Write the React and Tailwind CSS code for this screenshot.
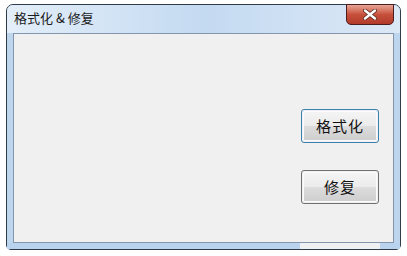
import React from "react";

const font = { fontFamily: '"Noto Sans CJK SC", "Liberation Sans", sans-serif' };

const AeroButton = ({ label, focused }) => (
  <button
    type="button"
    className={`w-[78px] h-[34px] rounded-[3px] border ${
      focused ? "border-[#3c7fb1]" : "border-[#707070]"
    } p-px`}
  >
    <span className="flex h-full w-full flex-col rounded-[2px] border border-[#fbfbfb] overflow-hidden relative">
      <span className="h-1/2 bg-gradient-to-b from-[#f4f4f4] to-[#ebebeb]" />
      <span className="h-1/2 bg-gradient-to-b from-[#dddddd] to-[#cfcfcf]" />
      <span className="absolute inset-0 flex items-center justify-center text-[15px] text-[#111] tracking-[1px]">
        {label}
      </span>
    </span>
  </button>
);

export default function App() {
  return (
    <div className="w-[407px] h-[256px] bg-white overflow-hidden pt-[4px]" style={font}>
      <div className="ml-[6px] w-[395px] h-[246px] rounded-t-[7px] rounded-b-[5px] border border-[#2f3b48] bg-[#bed5ee] flex flex-col">
        {/* title bar */}
        <div className="h-[28px] flex items-start justify-between rounded-t-[6px] bg-gradient-to-r from-[#e3eef9] via-[#c4daf1] to-[#dbe8f6] pl-[7px] pr-[6px]">
          <span className="pt-[5px] text-[13px] leading-[16px] text-[#1b1b1b]">格式化 &amp; 修复</span>
          <div className="-mt-px w-[48px] h-[21px] rounded-b-[5px] border border-[#4b1d1d] bg-gradient-to-b from-[#e8a596] via-[#c7503c] to-[#b13a2a] flex items-center justify-center">
            <svg width="14" height="11" viewBox="0 0 14 11">
              <path d="M2 1.5 L12 9.5 M12 1.5 L2 9.5" stroke="#5a2a24" strokeWidth="4" strokeLinecap="round" />
              <path d="M2 1.5 L12 9.5 M12 1.5 L2 9.5" stroke="#ffffff" strokeWidth="2.4" strokeLinecap="round" />
            </svg>
          </div>
        </div>

        {/* client area */}
        <div className="mx-[6px] flex-1 border border-[#8496ad] bg-[#f0f0f0] flex flex-col items-end pr-[14px] pt-[75px] gap-[27px]">
          <AeroButton label="格式化" focused />
          <AeroButton label="修复" />
        </div>

        {/* bottom frame */}
        <div className="h-[6px] flex">
          <div className="w-[293px] bg-[#b9d2ed]" />
          <div className="w-[80px] bg-[#eef0f2]" />
          <div className="flex-1 bg-[#b9d2ed]" />
        </div>
      </div>
    </div>
  );
}
